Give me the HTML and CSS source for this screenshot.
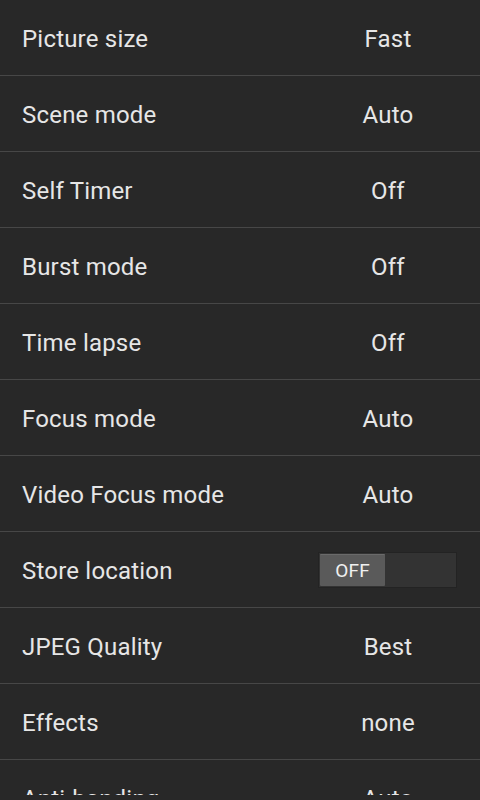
FILE: index.html
```html
<!DOCTYPE html>
<html>
<head>
<meta charset='utf-8'/>
<meta name='viewport' content='width=device-width,initial-scale=1'/>
<link rel="stylesheet" href="styles.css">
</head>
<body>
<div class='settings'>
<div class='row'><span class='label'>Picture size</span><span class='value'>Fast</span></div>
<div class='row'><span class='label'>Scene mode</span><span class='value'>Auto</span></div>
<div class='row'><span class='label'>Self Timer</span><span class='value'>Off</span></div>
<div class='row'><span class='label'>Burst mode</span><span class='value'>Off</span></div>
<div class='row'><span class='label'>Time lapse</span><span class='value'>Off</span></div>
<div class='row'><span class='label'>Focus mode</span><span class='value'>Auto</span></div>
<div class='row'><span class='label'>Video Focus mode</span><span class='value'>Auto</span></div>
<div class='row'><span class='label'>Store location</span>
<span class='value'><span class='switch'><span class='thumb'>OFF</span></span></span></div>
<div class='row'><span class='label'>JPEG Quality</span><span class='value'>Best</span></div>
<div class='row'><span class='label'>Effects</span><span class='value'>none</span></div>
<div class='row'><span class='label'>Anti-banding</span><span class='value'>Auto</span></div>
</div>
</body>
</html>
```

FILE: styles.css
```css
html, body {
    margin: 0;
    padding: 0;
    background-color: #282828;
}
div.settings {
    height: 795px;
    overflow: hidden;
    font-family: Roboto, "Noto Sans", sans-serif;
    color: #e6e6e6;
}
div.row {
    display: flex;
    align-items: center;
    height: 75px;
    border-bottom: 1px solid #474747;
    padding-left: 22px;
    padding-right: 24px;
    font-size: 24px;
    letter-spacing: 0.2px;
}
span.label {
    flex: 1;
    padding-top: 2px;
}
span.value {
    width: 136px;
    padding-top: 2px;
    text-align: center;
}
span.switch {
    display: flex;
    width: 135px;
    height: 32px;
    padding: 1px;
    margin-left: -2px;
    margin-top: -2px;
    background-color: #2e2e2e;
    background-image: radial-gradient(#383838 0.6px, transparent 0.8px);
    background-size: 2px 2px;
    border: 1px solid #232323;
}
span.thumb {
    display: block;
    width: 65px;
    height: 31px;
    line-height: 31px;
    background-color: #5a5a5a;
    border-top: 1px solid #6a6a6a;
    border-radius: 1px;
    font-size: 19px;
    color: #f0f0f0;
    text-align: center;
}
```
